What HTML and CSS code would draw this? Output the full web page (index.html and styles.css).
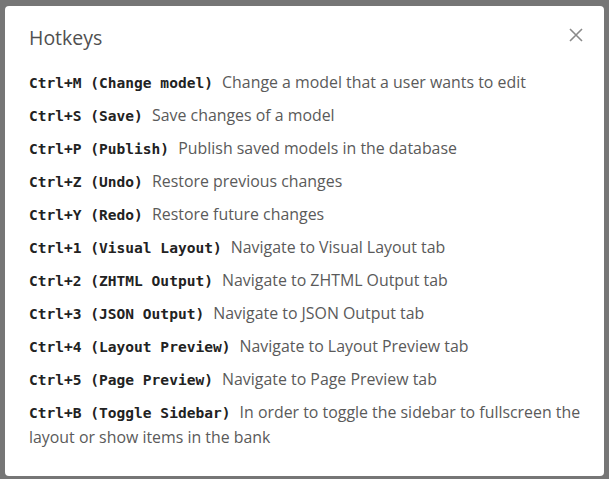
FILE: index.html
```html
<!DOCTYPE html>
<html>
<head>
<meta charset="utf-8">
<link rel="stylesheet" href="styles.css">
</head>
<body>
<div class="modal">
  <div class="modal-header">
    <h2 class="title">Hotkeys</h2>
    <button class="close" aria-label="Close">
      <svg width="14" height="14" viewBox="0 0 14 14"><path d="M1 1 L13 13 M13 1 L1 13" stroke="#8a8a8a" stroke-width="1.6" fill="none"/></svg>
    </button>
  </div>
  <div class="modal-body">
    <p class="row"><code class="key">Ctrl+M (Change model)</code> Change a model that a user wants to edit</p>
    <p class="row"><code class="key">Ctrl+S (Save)</code> Save changes of a model</p>
    <p class="row"><code class="key">Ctrl+P (Publish)</code> Publish saved models in the database</p>
    <p class="row"><code class="key">Ctrl+Z (Undo)</code> Restore previous changes</p>
    <p class="row"><code class="key">Ctrl+Y (Redo)</code> Restore future changes</p>
    <p class="row"><code class="key">Ctrl+1 (Visual Layout)</code> Navigate to Visual Layout tab</p>
    <p class="row"><code class="key">Ctrl+2 (ZHTML Output)</code> Navigate to ZHTML Output tab</p>
    <p class="row"><code class="key">Ctrl+3 (JSON Output)</code> Navigate to JSON Output tab</p>
    <p class="row"><code class="key">Ctrl+4 (Layout Preview)</code> Navigate to Layout Preview tab</p>
    <p class="row"><code class="key">Ctrl+5 (Page Preview)</code> Navigate to Page Preview tab</p>
    <p class="row"><code class="key">Ctrl+B (Toggle Sidebar)</code> In order to toggle the sidebar to fullscreen the layout or show items in the bank</p>
  </div>
</div>
</body>
</html>
```
FILE: styles.css
```css
html, body {
  margin: 0;
  padding: 0;
  height: 100%;
}
body {
  background: #767676;
  padding: 6px 5px 3px 5px;
  box-sizing: border-box;
  font-family: "Open Sans", "Liberation Sans", sans-serif;
}
.modal {
  background: #fff;
  border-radius: 4px;
  height: 470px;
  width: 599px;
  box-sizing: border-box;
  padding: 20px 18px 0 24px;
}
.modal-header {
  display: flex;
  justify-content: space-between;
  align-items: flex-start;
}
.title {
  margin: 0;
  font-weight: 400;
  font-size: 19.5px;
  line-height: 24px;
  color: #505050;
}
.close {
  border: 0;
  background: none;
  padding: 0;
  margin: 2px 3px 0 0;
  width: 14px;
  height: 14px;
  display: flex;
}
.modal-body {
  margin-top: 20px;
}
.row {
  margin: 0 0 8px 0;
  font-size: 15.9px;
  line-height: 25px;
  color: #5a5a5a;
}
.key {
  font-family: "DejaVu Sans Mono", "Liberation Mono", monospace;
  font-weight: 700;
  font-size: 14.55px;
  line-height: 1;
  margin-right: 5px;
  color: #222;
}
```
